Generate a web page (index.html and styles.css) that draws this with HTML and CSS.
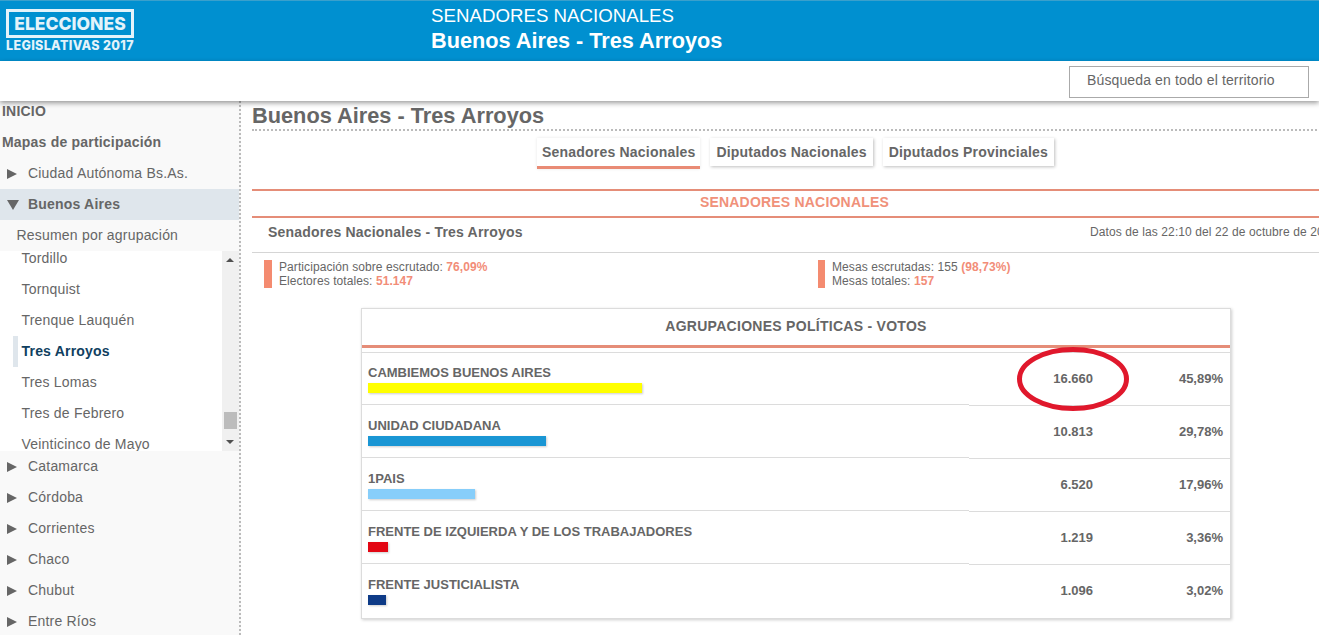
FILE: index.html
```html
<!DOCTYPE html>
<html lang="es">
<head>
<meta charset="utf-8">
<title>Elecciones Legislativas 2017</title>
<link rel="stylesheet" href="styles.css">
</head>
<body>
<div class="page">
  <header class="topbar">
    <div class="logo">
      <div class="logo-box">ELECCIONES</div>
      <div class="logo-sub">LEGISLATIVAS 2017</div>
    </div>
    <div class="top-titles">
      <div class="top-title">SENADORES NACIONALES</div>
      <div class="top-sub">Buenos Aires - Tres Arroyos</div>
    </div>
  </header>
  <div class="searchbar"><div class="search">Búsqueda en todo el territorio</div></div>
  <div class="layout">
    <nav class="sidebar">
      <div class="nav-head">INICIO</div>
      <div class="nav-head">Mapas de participación</div>
      <div class="nav-item"><span class="arrow"></span>Ciudad Autónoma Bs.As.</div>
      <div class="nav-item open"><span class="arrow"></span>Buenos Aires</div>
      <div class="nav-sub">Resumen por agrupación</div>
      <div class="scrollbox">
        <ul class="towns">
          <li>Tordillo</li>
          <li>Tornquist</li>
          <li>Trenque Lauquén</li>
          <li class="current">Tres Arroyos</li>
          <li>Tres Lomas</li>
          <li>Tres de Febrero</li>
          <li>Veinticinco de Mayo</li>
        </ul>
        <div class="scrollbar">
          <span class="sb-up"></span>
          <span class="sb-thumb"></span>
          <span class="sb-down"></span>
        </div>
      </div>
      <div class="nav-item"><span class="arrow"></span>Catamarca</div>
      <div class="nav-item"><span class="arrow"></span>Córdoba</div>
      <div class="nav-item"><span class="arrow"></span>Corrientes</div>
      <div class="nav-item"><span class="arrow"></span>Chaco</div>
      <div class="nav-item"><span class="arrow"></span>Chubut</div>
      <div class="nav-item"><span class="arrow"></span>Entre Ríos</div>
    </nav>
    <main class="main">
      <div class="content">
        <h1 class="page-title">Buenos Aires - Tres Arroyos</h1>
        <div class="tabs">
          <div class="tab active">Senadores Nacionales</div>
          <div class="tab">Diputados Nacionales</div>
          <div class="tab">Diputados Provinciales</div>
        </div>
        <h2 class="section">SENADORES NACIONALES</h2>
        <div class="info-row">
          <div class="info-title">Senadores Nacionales - Tres Arroyos</div>
          <div class="info-date">Datos de las 22:10 del 22 de octubre de 2017</div>
        </div>
        <div class="stats">
          <div class="stat">Participación sobre escrutado: <b>76,09%</b><br>Electores totales: <b>51.147</b></div>
          <div class="stat">Mesas escrutadas: 155 <b>(98,73%)</b><br>Mesas totales: <b>157</b></div>
        </div>
        <section class="card">
          <div class="card-head">AGRUPACIONES POLÍTICAS - VOTOS</div>
          <div class="rows">
            <div class="row">
              <div class="party">CAMBIEMOS BUENOS AIRES<i class="bar bar-a"></i></div>
              <div class="votes">16.660</div>
              <div class="pct">45,89%</div>
            </div>
            <div class="row">
              <div class="party">UNIDAD CIUDADANA<i class="bar bar-b"></i></div>
              <div class="votes">10.813</div>
              <div class="pct">29,78%</div>
            </div>
            <div class="row">
              <div class="party">1PAIS<i class="bar bar-c"></i></div>
              <div class="votes">6.520</div>
              <div class="pct">17,96%</div>
            </div>
            <div class="row">
              <div class="party">FRENTE DE IZQUIERDA Y DE LOS TRABAJADORES<i class="bar bar-d"></i></div>
              <div class="votes">1.219</div>
              <div class="pct">3,36%</div>
            </div>
            <div class="row last">
              <div class="party">FRENTE JUSTICIALISTA<i class="bar bar-e"></i></div>
              <div class="votes">1.096</div>
              <div class="pct">3,02%</div>
            </div>
          </div>
          <svg class="circle" width="116" height="68" viewBox="0 0 116 68" aria-hidden="true">
            <ellipse cx="58" cy="34" rx="53.5" ry="29.5" fill="none" stroke="#e0182c" stroke-width="5"/>
          </svg>
        </section>
      </div>
    </main>
  </div>
</div>
</body>
</html>
```

FILE: styles.css
```css
* { box-sizing: border-box; }
html, body { margin: 0; padding: 0; height: 100%; overflow: hidden; background: #fff; }
body { font-family: "Liberation Sans", Arial, sans-serif; color: #666; }
.page { width: 1319px; height: 635px; display: flex; flex-direction: column; overflow: hidden; }

.topbar { height: 61px; flex: none; background: #0090d0; border-top: 1px solid #3aa0cc; display: flex; color: #fff; }
.logo { width: 431px; padding: 8px 0 0 6px; flex: none; }
.logo-box { width: 128px; height: 29px; border: 3px solid #e4f3fa; font-family: Inter, "Liberation Sans", sans-serif; font-weight: 800; font-size: 17.5px; line-height: 23px; text-align: center; white-space: nowrap; color: #e4f3fa; }
.logo-sub { width: 129px; margin-top: 0; font-family: Inter, "Liberation Sans", sans-serif; font-weight: 800; font-size: 12.5px; line-height: 15px; letter-spacing: .35px; white-space: nowrap; color: #e4f3fa; }
.top-title { font-size: 18.7px; line-height: 20px; margin-top: 5px; }
.top-sub { font-size: 21.7px; font-weight: bold; line-height: 24px; margin-top: 3px; }

.searchbar { height: 40px; flex: none; background: #fff; display: flex; justify-content: flex-end; padding: 5px 10px 0 0; box-shadow: 0 2px 5px rgba(0,0,0,.4); position: relative; z-index: 2; }
.search { width: 240px; height: 32px; border: 1px solid #aaa; font-size: 14px; line-height: 27px; padding-left: 17px; letter-spacing: .13px; }

.layout { flex: 1; display: flex; min-height: 0; }
.sidebar { width: 241px; flex: none; background: #f9f9f9; border-right: 2px dotted #bbb; overflow: hidden; font-size: 14px; letter-spacing: .2px; }
.nav-head { height: 31px; line-height: 31px; padding-left: 2px; font-weight: bold; }
.nav-head:first-child { margin-top: -5px; }
.nav-item { height: 31px; line-height: 31px; padding-left: 7px; display: flex; align-items: center; white-space: nowrap; }
.nav-item.open { background: #dfe6ec; font-weight: bold; }
.arrow { width: 0; height: 0; margin-right: 11px; border-left: 10px solid #666; border-top: 5px solid transparent; border-bottom: 5px solid transparent; flex: none; }
.open .arrow { margin-right: 9px; border-left: 6px solid transparent; border-right: 6px solid transparent; border-top: 10px solid #666; border-bottom: 0; }
.nav-sub { height: 31px; line-height: 31px; padding-left: 16.5px; }
.scrollbox { height: 200px; display: flex; background: #fff; overflow: hidden; }
.towns { flex: 1; list-style: none; margin: -8px 0 0; padding: 0 0 0 13px; }
.towns li { height: 31px; line-height: 31px; padding-left: 8.5px; white-space: nowrap; }
.towns .current { color: #10405f; font-weight: bold; box-shadow: inset 5px 0 0 #dfe6ec; }
.scrollbar { width: 17px; flex: none; background: #f0f0f0; position: relative; }
.sb-up, .sb-down { position: absolute; left: 4px; width: 0; height: 0; border-left: 4px solid transparent; border-right: 4px solid transparent; }
.sb-up { top: 7px; border-bottom: 4px solid #505050; }
.sb-down { bottom: 7px; border-top: 4px solid #505050; }
.sb-thumb { position: absolute; left: 2px; top: 161px; width: 13px; height: 17px; background: #bcbcbc; }

.main { flex: 1; min-width: 0; overflow: hidden; padding-left: 11px; }
.content { width: 1085px; }
.page-title { margin: 0; height: 30px; font-size: 21.75px; line-height: 29px; font-weight: bold; border-bottom: 2px dotted #bbb; white-space: nowrap; }
.tabs { display: flex; justify-content: center; gap: 10px; padding: 7px 0 0 2px; height: 58px; }
.tab { height: 28px; padding: 0 6px; font-size: 14px; font-weight: bold; line-height: 29px; letter-spacing: .2px; background: #fff; box-shadow: 1px 1px 3px rgba(0,0,0,.25); white-space: nowrap; }
.tab.active { height: 31px; padding: 0 5px; border-bottom: 3px solid #e98b75; box-shadow: 0 0 3px rgba(0,0,0,.1); }
.section { margin: 0; height: 29px; border-top: 2px solid #e58d78; border-bottom: 2px solid #e58d78; font-size: 14px; line-height: 23px; font-weight: bold; letter-spacing: .2px; text-align: center; color: #f0917a; }
.info-row { height: 35px; border-bottom: 1px solid #d5d5d5; display: flex; justify-content: space-between; align-items: flex-start; padding: 6px 0 0 16px; white-space: nowrap; }
.info-title { font-size: 14px; font-weight: bold; line-height: 16px; letter-spacing: .2px; }
.info-date { font-size: 12px; line-height: 14px; margin-top: 1px; letter-spacing: .1px; width: 247px; overflow: hidden; }
.stats { display: flex; padding: 7px 0 0 12px; height: 55px; }
.stat { width: 554px; border-left: 8px solid #f48b70; padding-left: 7px; font-size: 12px; letter-spacing: .08px; line-height: 14px; height: 28px; }
.stat b { color: #f28d78; }
.stat + .stat { width: 400px; border-left-width: 7px; }

.card { position: relative; margin-left: 109px; width: 870px; height: 311px; border: 1px solid #dcdcdc; box-shadow: 1px 1px 3px rgba(0,0,0,.2); }
.card-head { height: 39px; padding-top: 1px; border-bottom: 3px solid #e58d78; font-size: 14px; line-height: 32px; font-weight: bold; letter-spacing: .28px; text-align: center; margin-bottom: 4px; }
.rows { border-top: 1px solid #dcdcdc; }
.row { display: flex; height: 53px; }
.party { width: 607px; height: 52px; flex: none; padding: 12px 0 0 6px; font-size: 13px; font-weight: bold; line-height: 16px; border-bottom: 1px solid #dcdcdc; }
.bar { display: block; height: 10px; margin-top: 2px; box-shadow: 1px 1px 2px rgba(0,0,0,.2); }
.bar-a { width: 274px; background: #ffff00; }
.bar-b { width: 178px; background: #1a96d4; }
.bar-c { width: 107px; background: #87cefa; }
.bar-d { width: 20px; background: #e30613; }
.bar-e { width: 18px; background: #0e3b87; }
.votes { width: 124px; text-align: right; font-size: 13px; font-weight: bold; line-height: 52px; border-bottom: 1px solid #dcdcdc; }
.pct { flex: 1; text-align: right; padding-right: 7px; font-size: 13px; font-weight: bold; line-height: 52px; border-bottom: 1px solid #dcdcdc; }
.last .party, .last .votes, .last .pct { border-bottom: 0; }
.circle { position: absolute; left: 653px; top: 36px; }
```
